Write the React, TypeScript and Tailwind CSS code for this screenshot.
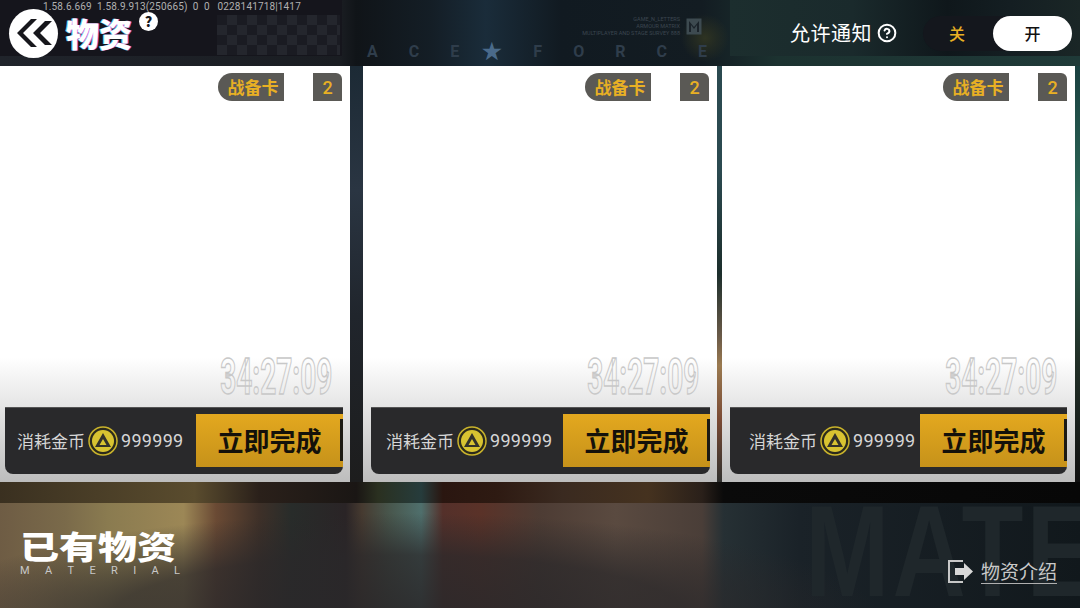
import { HelpCircle } from 'lucide-react';

const cjk = "font-['Noto_Sans_CJK_SC','Noto_Sans',sans-serif]";

function Coin() {
  return (
    <svg width="30" height="30" viewBox="0 0 30 30" className="ml-[3px] shrink-0">
      <circle cx="15" cy="15" r="14" fill="#2b2a1c" stroke="#c9b32c" strokeWidth="1.5" />
      <circle cx="15" cy="15" r="11" fill="#d8c331" />
      <path d="M15 7 L23 21 H7 Z M15 13 L11.5 19 H18.5 Z" fill="#33322a" fillRule="evenodd" />
    </svg>
  );
}

function ResourceCard({ className, barClass, priceClass }: { className: string; barClass: string; priceClass: string }) {
  return (
    <div className={`flex flex-col h-[416px] bg-[linear-gradient(180deg,#ffffff_0%,#ffffff_70%,#e9e9e9_80%,#bdbdbd_100%)] ${className}`}>
      <div className="flex justify-end pt-[7px] pr-2">
        <div className="flex h-7 w-[124px] items-stretch">
          <div className={`flex w-[66px] items-center justify-center rounded-l-full bg-[#5a5955] pl-[4px] text-[17px] font-bold text-[#e8b024] ${cjk}`}>
            战备卡
          </div>
          <div className="flex-1" />
          <div className="flex w-[29px] items-center justify-center rounded-tr-md bg-[#5a5955] font-['Roboto',sans-serif] text-[18px] font-medium text-[#e8b024]">
            2
          </div>
        </div>
      </div>
      <div className="mt-auto flex justify-end pr-[18px]">
        <span className="inline-block origin-right scale-x-[0.56] font-['Roboto',sans-serif] text-[50px] leading-[42px] font-bold text-transparent [-webkit-text-stroke:1.5px_#c8c8c8]">
          34:27:09
        </span>
      </div>
      <div className={`mt-[9px] mb-2 flex h-[67px] items-center rounded-b-lg bg-[#29292b] shadow-[inset_0_1px_#555] ${barClass}`}>
        <span className={`text-[17px] text-[#d6d6d6] ${priceClass} ${cjk}`}>消耗金币</span>
        <Coin />
        <span className="ml-[3px] font-['Roboto',sans-serif] text-[18px] tracking-[0.3px] text-[#d6d6d6]">999999</span>
        <div className="relative ml-auto flex h-[53px] w-[147px] items-center justify-center bg-[linear-gradient(180deg,#e3a81f,#c6921a)] pb-[3px]">
          <span className={`text-[26px] font-bold text-[#14110a] ${cjk}`}>立即完成</span>
          <div className="absolute top-[5px] right-0 h-[42px] w-[3px] bg-[#1c1a14]" />
        </div>
      </div>
    </div>
  );
}

export default function App() {
  return (
    <div className={`relative h-[608px] w-[1080px] overflow-hidden bg-[#111] ${cjk}`}>
      {/* top strip */}
      <header className="relative flex h-[66px] items-center bg-[radial-gradient(circle_at_705px_38px,#2e3322_0px,transparent_24px),linear-gradient(90deg,#20242b_0%,#1a1d22_31.5%,#101418_33%,#141e26_40%,#1a2c3a_45%,#111a21_52%,#131c22_65%,#1c3230_72%,#1f3a38_100%)]">
        <div className="absolute top-0 left-0 h-[56px] w-[342px] bg-[#15151c]" />
        <div className="absolute top-[15px] left-[217px] h-[40px] w-[123px] bg-[repeating-conic-gradient(#24262d_0%_25%,#1a1b22_0%_50%)] bg-[length:20px_20px]" />
        <span className="absolute top-[-1px] left-[43px] font-['Roboto',sans-serif] text-[10px] tracking-[0.15px] whitespace-pre text-[#b0b0b0]">
          {'1.58.6.669  1.58.9.913(250665)  0  0   0228141718|1417'}
        </span>
        <button className="relative ml-[9px] flex h-[49px] w-[49px] items-center justify-center rounded-full bg-white">
          <svg width="38" height="30" viewBox="0 0 38 30">
            <path d="M16 1 L2 15 L16 29 H22 L8 15 L22 1 Z" fill="#17171c" />
            <path d="M30 3 L18 15 L30 27 H37 L25 15 L37 3 Z" fill="#17171c" />
          </svg>
        </button>
        <span className="relative ml-2 text-[33px] leading-none font-black text-white [text-shadow:1px_0_#d060e0,-1px_0_#60d0e0]">物资</span>
        <div className="relative mb-[24px] ml-[7px] flex h-[19px] w-[19px] items-center justify-center rounded-full bg-white text-[14px] leading-none font-black text-[#17171c]">?</div>

        <div className="absolute top-0 left-[730px] h-[56px] w-[350px] bg-[linear-gradient(90deg,#1c2e2e,#1a2a2c_35%,#0f171b_62%,#141e22_80%,#1a2626)]" />
        <div className="absolute top-[40px] left-[367px] flex w-[340px] items-center justify-between font-['Roboto',sans-serif] text-[16px] font-bold text-[#2f3d4b]">
          <span>A</span><span>C</span><span>E</span><span className="-ml-2 text-[22px] leading-none text-[#4a6a8a]">★</span><span>F</span><span>O</span><span>R</span><span>C</span><span>E</span>
        </div>
        <div className="absolute top-[16px] right-[378px] flex items-center gap-[6px]">
          <div className="flex flex-col items-end font-['Roboto',sans-serif] text-[5.5px] leading-[7px] text-[#3c4650]">
            <span>GAME_N_LETTERS</span><span>ARMOUR MATRIX</span><span>MULTIPLAYER AND STAGE SURVEY 888</span>
          </div>
          <svg width="16" height="17" viewBox="0 0 16 17">
            <rect x="0.5" y="0.5" width="15" height="16" fill="#3d4a50" />
            <path d="M3 3 L8 9 L13 3 V14 H11 V7 L8 11 L5 7 V14 H3 Z" fill="#1b232a" />
          </svg>
        </div>

        <div className="relative ml-auto flex items-center">
          <span className="text-[20px] tracking-[0.5px] text-white">允许通知</span>
          <HelpCircle className="ml-[5px] text-white" size={20} strokeWidth={2.4} />
          <div className="mr-2 ml-[26px] flex h-[35px] w-[149px] items-center rounded-full bg-[#14171d]">
            <span className="flex-1 pr-[2px] text-center text-[16px] font-medium text-[#e8b024]">关</span>
            <span className="flex h-[35px] w-[79px] items-center justify-center rounded-full bg-white text-[16px] font-medium text-[#111]">开</span>
          </div>
        </div>
      </header>

      {/* cards */}
      <main className="flex h-[416px]">
        <ResourceCard className="w-[350px]" barClass="mr-[7px] ml-[5px]" priceClass="ml-3" />
        <div className="w-[13px] bg-[linear-gradient(180deg,#1c2a35_0%,#2a3542_30%,#20252c_60%,#1d1d1d_100%)]" />
        <ResourceCard className="w-[354px]" barClass="mr-[7px] ml-2" priceClass="ml-[15px]" />
        <div className="w-[5px] bg-[linear-gradient(180deg,#2b4a50_0%,#2b4a50_25%,#1c2e2c_50%,#6a5a48_65%,#9a7a50_72%,#7a4a34_85%,#30302e_100%)]" />
        <ResourceCard className="w-[353px]" barClass="mx-2" priceClass="ml-[19px]" />
        <div className="w-[5px] bg-[linear-gradient(180deg,#1a4040_0%,#2e6a58_35%,#223028_70%,#111111_100%)]" />
      </main>

      <div className="h-[21px] bg-[linear-gradient(90deg,#3a3020_0%,#5a4c2e_18%,#2a201a_24%,#1a1614_33%,#2a3020_35%,#263c3c_39%,#2a1610_41%,#2e1a12_46%,#3a2a20_52%,#45321f_60%,#2a201a_65%,#0a0a0a_67%,#070707_100%)]" />

      {/* owned material */}
      <footer className="relative h-[105px] overflow-hidden bg-[radial-gradient(ellipse_480px_105px_at_400px_115px,#2a282ae6_0%,#2a282abb_60%,transparent_100%),linear-gradient(90deg,#6e5c44_0%,#7a6a4a_6%,#8a7b50_10%,#9c8756_17%,#6a4a34_20%,#3e3028_24%,#282c2a_27%,#2a2426_32%,#463a30_33.5%,#48564c_36%,#4f6f6c_39%,#54302a_41%,#5a3228_44.5%,#4d3c34_50%,#5a4a40_57%,#4a3e38_65%,#263034_67%,#1a2228_74%,#11181c_100%)]">
        <div className="absolute top-[-17px] left-[805px] origin-left scale-x-[0.78] font-['Liberation_Sans',sans-serif] text-[130px] leading-none font-bold tracking-[4px] whitespace-nowrap text-[#1f272b]">MATE</div>
        <div className="absolute top-[25px] left-[20px] flex flex-col">
          <span className="inline-block scale-y-[0.82] text-[39px] leading-[34px] font-black whitespace-nowrap text-white">已有物资</span>
          <div className="mt-[3px] flex w-[160px] justify-between font-['Roboto',sans-serif] text-[11px] leading-[12px] text-[#c8c8c8]">
            <span>M</span><span>A</span><span>T</span><span>E</span><span>R</span><span>I</span><span>A</span><span>L</span>
          </div>
        </div>
        <div className="absolute top-[56px] right-[23px] flex items-center gap-[7px]">
          <svg width="27" height="23" viewBox="0 0 27 23">
            <path d="M16 1 H2 V22 H16" fill="none" stroke="#c8c8c8" strokeWidth="2" />
            <path d="M8 8 H17 V3 L26 11.5 L17 20 V15 H8 Z" fill="#d8d8d8" />
          </svg>
          <span className="border-b border-[#b0b0b0] text-[19px] leading-[24px] text-[#c8c8c8]">物资介绍</span>
        </div>
      </footer>
    </div>
  );
}
